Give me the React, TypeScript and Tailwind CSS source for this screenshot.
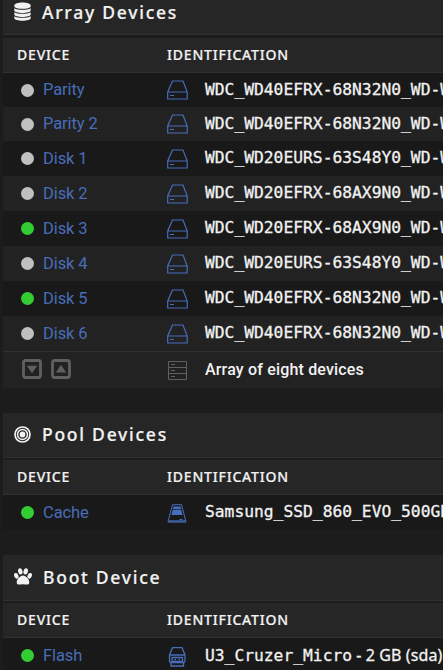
type Device = { name: string; id: string; extra?: string; active?: boolean; icon: 'disk' | 'ssd' | 'usb'; height: string };

const arrayDevices: Device[] = [
  { name: 'Parity', id: 'WDC_WD40EFRX-68N32N0_WD-W', icon: 'disk', height: 'h-[34px]' },
  { name: 'Parity 2', id: 'WDC_WD40EFRX-68N32N0_WD-W', icon: 'disk', height: 'h-[34px]' },
  { name: 'Disk 1', id: 'WDC_WD20EURS-63S48Y0_WD-W', icon: 'disk', height: 'h-[35px]' },
  { name: 'Disk 2', id: 'WDC_WD20EFRX-68AX9N0_WD-W', icon: 'disk', height: 'h-[35px]' },
  { name: 'Disk 3', id: 'WDC_WD20EFRX-68AX9N0_WD-W', active: true, icon: 'disk', height: 'h-[35px]' },
  { name: 'Disk 4', id: 'WDC_WD20EURS-63S48Y0_WD-W', icon: 'disk', height: 'h-[35px]' },
  { name: 'Disk 5', id: 'WDC_WD40EFRX-68N32N0_WD-W', active: true, icon: 'disk', height: 'h-[35px]' },
  { name: 'Disk 6', id: 'WDC_WD40EFRX-68N32N0_WD-W', icon: 'disk', height: 'h-[35px]' },
];

const poolDevices: Device[] = [
  { name: 'Cache', id: 'Samsung_SSD_860_EVO_500GB', active: true, icon: 'ssd', height: 'h-[35px]' },
];

const bootDevices: Device[] = [
  { name: 'Flash', id: 'U3_Cruzer_Micro', extra: ' - 2 GB (sda)', active: true, icon: 'usb', height: 'h-[35px]' },
];

function DatabaseIcon() {
  return (
    <svg className="shrink-0" width="17" height="19" viewBox="0 0 17 19" fill="#f2f2f2">
      <path d="M.3 3.5C.3-.6 16.7-.6 16.7 3.5v.7C16.7 7.7.3 7.7.3 4.2z" />
      <path d="M.3 6.2c3 2.2 13.4 2.2 16.4 0v2c0 3.6-16.4 3.6-16.4 0z" />
      <path d="M.3 10.2c3 2.2 13.4 2.2 16.4 0v2c0 3.6-16.4 3.6-16.4 0z" />
      <path d="M.3 14.2c3 2.2 13.4 2.2 16.4 0v1.8c0 3.6-16.4 3.6-16.4 0z" />
    </svg>
  );
}

function TargetIcon() {
  return (
    <svg className="shrink-0" width="17" height="17" viewBox="0 0 17 17" fill="none" stroke="#f2f2f2">
      <circle cx="8.5" cy="8.5" r="7.5" strokeWidth="1.7" />
      <circle cx="8.5" cy="8.5" r="5" strokeWidth="1.5" />
      <circle cx="8.5" cy="8.5" r="2.9" fill="#f2f2f2" stroke="none" />
    </svg>
  );
}

function PawIcon() {
  return (
    <svg className="shrink-0" width="18" height="17" viewBox="0 0 18 17" fill="#f2f2f2">
      <ellipse cx="6.3" cy="3.4" rx="2.2" ry="3.2" transform="rotate(-12 6.3 3.4)" />
      <ellipse cx="11.7" cy="3.4" rx="2.2" ry="3.2" transform="rotate(12 11.7 3.4)" />
      <ellipse cx="2.3" cy="7.8" rx="2.1" ry="2.9" transform="rotate(-22 2.3 7.8)" />
      <ellipse cx="15.7" cy="7.8" rx="2.1" ry="2.900" transform="rotate(22 15.7 7.8)" />
      <path d="M9 7.6c2.9 0 6.3 3.9 6.3 6.6 0 3.500-3.900 2.100-6.300 2.100s-6.300 1.400-6.300-2.100c0-2.700 3.400-6.600 6.300-6.600z" />
    </svg>
  );
}

function DeviceIcon({ kind }: { kind: Device['icon'] }) {
  if (kind === 'ssd') {
    return (
      <svg className="mt-0.5 shrink-0" width="21" height="20" viewBox="0 0 21 20" fill="none" stroke="#486dba">
        <path d="M5.500 .7h9L18.800 17H1.200z" />
        <path d="M6.500 2.500h7l2 8.500H4.500z" fill="#486dba" stroke="none" />
        <path d="M5.500 5.500h9" stroke="#191919" strokeWidth=".7" />
        <path d="M.7 16.500h18.600v2.500H.7z" fill="#486dba" fillOpacity=".6" stroke="none" />
        <path d="M12.500 15.500h3" />
      </svg>
    );
  }
  if (kind === 'usb') {
    return (
      <svg className="mt-[3px] shrink-0" width="21" height="20" viewBox="0 0 21 20" fill="none" stroke="#486dba" strokeWidth="1.3">
        <path d="M5.500 .7H15L18 8v6q0 1.500-1.500 1.500H4Q2.500 15.500 2.500 14V8zM2.500 8H18" />
        <path d="M5 10.500h10.500v4H5zM4 15.500V19h12.500v-3.500" />
        <path d="M7.500 12.500H9m2.500 0H13" />
      </svg>
    );
  }
  return (
    <svg className="shrink-0" width="21" height="20" viewBox="0 0 21 20" fill="none" stroke="#486dba" strokeWidth="1.2">
      <path d="M5.500 1h10.500l4.200 11V19H.7v-7zM.7 12h19.500M3 15.500h4" />
    </svg>
  );
}

function ArrayIcon() {
  return (
    <svg className="shrink-0" width="20" height="20" viewBox="0 0 20 20" fill="none" stroke="#606060">
      <path d="M.5 1.500h18v18H.5zM.5 7.500h18M.5 13.500h18M3 4.500h4M3 10.500h4M3 16.500h4" />
    </svg>
  );
}

function ArrowButton({ up }: { up?: boolean }) {
  return (
    <svg width="20" height="20" viewBox="0 0 20 20">
      <rect x="1.5" y="1.5" width="17" height="17" rx="2" fill="none" stroke="#606060" strokeWidth="2.8" />
      <path d={up ? 'M4.800 13.500h10.400L10 5.800z' : 'M4.800 6.800h10.400L10 14.300z'} fill="#606060" />
    </svg>
  );
}

function TableHead() {
  return (
    <div className="flex h-[35px] items-center border-b border-[#303030] bg-[#262626] pb-0.5 font-['Noto_Sans',sans-serif] text-[14px] font-medium text-[#f2f2f2] [-webkit-text-stroke:0.2px]">
      <span className="w-[150px] pl-3.5 tracking-[0.8px]">DEVICE</span>
      <span className="pl-3.5 tracking-[0.8px]">IDENTIFICATION</span>
    </div>
  );
}

function DeviceRow({ device }: { device: Device }) {
  return (
    <div className={`flex items-center whitespace-nowrap odd:bg-[#191919] even:bg-[#222222] ${device.height}`}>
      <div className="flex w-[164px] shrink-0 items-center pl-[18px]">
        <span className={`size-[13px] rounded-full ${device.active ? 'bg-[#33cc33]' : 'bg-[#c0c0c0]'}`} />
        <span className="ml-[9px] pt-px font-['Roboto',sans-serif] text-[16.5px] tracking-[-0.1px] text-[#486dba]">{device.name}</span>
      </div>
      <DeviceIcon kind={device.icon} />
      <div className="ml-[17px] font-['DejaVu_Sans_Mono',monospace] text-[16.3px] text-[#f2f2f2] [-webkit-text-stroke:0.3px]">
        {device.id}
        {device.extra && <span className="whitespace-pre font-['Noto_Sans',sans-serif] text-[16px] tracking-[0.1px]">{device.extra}</span>}
      </div>
    </div>
  );
}

const titleStyle = "flex items-center border-b border-[#303030] bg-[#262626] pl-[11px] font-['Noto_Sans',sans-serif] text-[17.5px] font-medium text-[#f2f2f2] [-webkit-text-stroke:0.2px]";

export default function App() {
  return (
    <main className="h-[670px] w-[443px] overflow-hidden bg-[#1c1c1c] pl-[3px]">
      <section>
        <h2 className={`${titleStyle} h-[35px] pb-[11px]`}>
          <DatabaseIcon />
          <span className="ml-[11px] pt-px tracking-[1.75px]">Array Devices</span>
        </h2>
        <div className="mt-[3px]">
          <TableHead />
          <div>
            {arrayDevices.map((device) => <DeviceRow key={device.name} device={device} />)}
          </div>
          <div className="flex h-[37px] items-center border-t border-[#303030] bg-[#222222]">
            <div className="flex w-[165px] gap-[9px] pb-[3px] pl-[19px]">
              <ArrowButton />
              <ArrowButton up />
            </div>
            <ArrayIcon />
            <span className="ml-[17px] font-['Roboto',sans-serif] text-[16px] font-medium tracking-[0.17px] text-[#f2f2f2]">Array of eight devices</span>
          </div>
        </div>
      </section>

      <section className="mt-[25px]">
        <h2 className={`${titleStyle} h-[45px] pb-0.5`}>
          <TargetIcon />
          <span className="ml-[11px] pt-px tracking-[1.75px]">Pool Devices</span>
        </h2>
        <div className="mt-0.5">
          <TableHead />
          <div>
            {poolDevices.map((device) => <DeviceRow key={device.name} device={device} />)}
          </div>
        </div>
      </section>

      <section className="mt-[25px]">
        <h2 className={`${titleStyle} h-[46px] pb-0.5`}>
          <PawIcon />
          <span className="ml-[11px] pt-px tracking-[1.75px]">Boot Device</span>
        </h2>
        <div className="mt-0.5">
          <TableHead />
          <div>
            {bootDevices.map((device) => <DeviceRow key={device.name} device={device} />)}
          </div>
        </div>
      </section>
    </main>
  );
}
